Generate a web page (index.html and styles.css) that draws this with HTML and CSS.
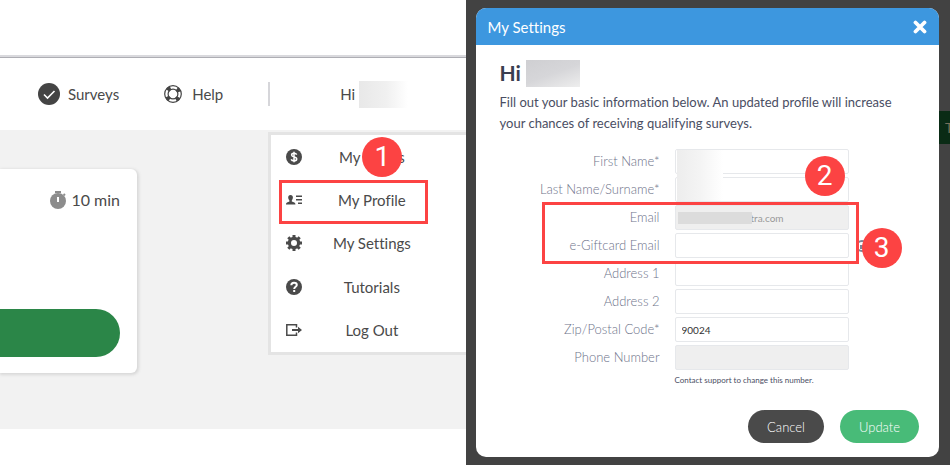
FILE: index.html
```html
<!DOCTYPE html>
<html lang="en">
<head>
    <meta charset="UTF-8">
    <meta name="viewport" content="width=device-width, initial-scale=1.0">
    <title>My Settings</title>
    <link rel="stylesheet" href="styles.css">
</head>
<body>
    <div class="panel">
        <header class="topbar"></header>
        <nav class="nav">
            <a class="nav-link" href="#">
                <svg class="check-icon" viewBox="0 0 22 22" aria-hidden="true">
                    <circle cx="11" cy="11" r="11" fill="#444"/>
                    <path d="M6 11.5l3.5 3.5 7-7" fill="none" stroke="#fff" stroke-width="1.6"/>
                </svg>
                Surveys
            </a>
            <a class="nav-link" href="#">
                <svg class="help-icon" viewBox="0 0 18 18" fill="none" stroke="#444" aria-hidden="true">
                    <circle cx="9" cy="9" r="8.3" stroke-width="1.2"/>
                    <circle cx="9" cy="9" r="4.9" stroke-width="1.2"/>
                    <circle cx="9" cy="9" r="6.5" stroke-width="4" stroke-dasharray="3.600 6.610" stroke-dashoffset="-3.300"/>
                </svg>
                Help
            </a>
            <div class="user">
                <span class="divider"></span>
                <span>Hi</span>
                <span class="redacted redacted-user"></span>
                <ul class="menu">
                    <li>
                        <a href="#">
                            <svg viewBox="0 0 16 16" aria-hidden="true">
                                <circle cx="8" cy="8" r="8" fill="#4a4a4a"/>
                                <path d="M10.7 5.6C10.2 4.7 9.3 4.3 8.1 4.3 6.500 4.300 5.600 5 5.600 6c0 2.600 5.100 1.200 5.100 3.900 0 1.100-1 1.900-2.700 1.900-1.400 0-2.400-.500-2.900-1.500M8 2.800v10.400" fill="none" stroke="#fff" stroke-width="1.5"/>
                            </svg>
                            <span>My Points</span>
                        </a>
                        <b class="badge badge-1">1</b>
                    </li>
                    <li>
                        <a href="#">
                            <svg viewBox="0 0 16 16" fill="#4a4a4a" aria-hidden="true">
                                <path d="M4.500 3C6.200 3 6.900 4.200 6.900 5.600c0 1.200-.500 2.200-1.100 2.800v1l2.600 1c.700.300 1 .900 1 1.600v.500H0V12c0-.700.300-1.300 1-1.600l2.400-1v-1C2.700 7.800 2.200 6.800 2.200 5.600 2.200 4.200 2.900 3 4.500 3z"/>
                                <path d="M10 3.500h6V5h-6zM10 7h6v1.500h-6zM12 10.500h4V12h-4z"/>
                            </svg>
                            <span>My Profile</span>
                        </a>
                        <i class="outline outline-profile"></i>
                    </li>
                    <li>
                        <a href="#">
                            <svg viewBox="0 0 16 16" aria-hidden="true">
                                <circle cx="8" cy="8" r="4.600" fill="none" stroke="#4a4a4a" stroke-width="3.200"/>
                                <path d="M8 0v3M8 13v3M0 8h3M13 8h3M2.300 2.300l2.200 2.200M11.500 11.500l2.200 2.200M13.700 2.300l-2.200 2.200M4.500 11.500l-2.200 2.200" stroke="#4a4a4a" stroke-width="3"/>
                            </svg>
                            <span>My Settings</span>
                        </a>
                    </li>
                    <li>
                        <a href="#">
                            <svg viewBox="0 0 16 16" aria-hidden="true">
                                <circle cx="8" cy="8" r="8" fill="#4a4a4a"/>
                                <path d="M5.300 6.200C5.300 4.500 6.400 3.700 8 3.700s2.800.900 2.800 2.300C10.800 7.800 8.200 7.800 8.200 10" fill="none" stroke="#fff" stroke-width="2"/>
                                <path d="M7.200 11h2v2h-2z" fill="#fff"/>
                            </svg>
                            <span>Tutorials</span>
                        </a>
                    </li>
                    <li>
                        <a href="#">
                            <svg viewBox="0 0 16 16" aria-hidden="true">
                                <path d="M10.500 5.500V2.800H.800v10.400h9.700V10.500" fill="none" stroke="#4a4a4a" stroke-width="1.500"/>
                                <path d="M6 7h6V4.800L16 8l-4 3.200V9H6z" fill="#4a4a4a"/>
                            </svg>
                            <span>Log Out</span>
                        </a>
                    </li>
                </ul>
            </div>
        </nav>
        <main class="surveys">
            <article class="card">
                <p class="duration">
                    <svg viewBox="0 0 16 18" aria-hidden="true">
                        <path d="M5 0h6v2H5zM13 3.500l1.200-1.200 1.500 1.500-1.200 1.200z" fill="#8c8c8c"/>
                        <circle cx="8" cy="10" r="8" fill="#8c8c8c"/>
                        <path d="M7 6h2v5H7z" fill="#fff"/>
                    </svg>
                    10 min
                </p>
                <button class="start-btn" type="button" aria-label="Start survey"></button>
            </article>
        </main>
    </div>

    <div class="overlay">
        <button class="behind-btn" type="button">T</button>
        <section class="modal">
            <header class="modal-header">
                <h2>My Settings</h2>
                <button class="close-btn" type="button" aria-label="Close">
                    <svg viewBox="0 0 14 14" aria-hidden="true">
                        <path d="M2.500 2.500l9 9M11.500 2.500l-9 9" stroke="#fff" stroke-width="3.800" stroke-linecap="round"/>
                    </svg>
                </button>
            </header>
            <form class="modal-body">
                <h1>Hi <span class="redacted redacted-title"></span></h1>
                <p class="intro">Fill out your basic information below. An updated profile will increase your chances of receiving qualifying surveys.</p>
                <div class="fields">
                    <label for="first-name">First Name*</label>
                    <input type="text" id="first-name">
                    <label for="last-name">Last Name/Surname*</label>
                    <input type="text" id="last-name">
                    <label for="email">Email</label>
                    <input class="email" type="text" id="email" value="tra.com" disabled>
                    <label for="giftcard-email">e-Giftcard Email</label>
                    <input type="text" id="giftcard-email">
                    <label for="address-1">Address 1</label>
                    <input type="text" id="address-1">
                    <label for="address-2">Address 2</label>
                    <input type="text" id="address-2">
                    <label for="zip">Zip/Postal Code*</label>
                    <input type="text" id="zip" value="90024">
                    <label for="phone">Phone Number</label>
                    <input type="text" id="phone" disabled>
                    <small>Contact support to change this number.</small>

                    <span class="redacted-names"></span>
                    <span class="redacted-email"></span>
                    <svg class="info-icon" viewBox="0 0 12 12" aria-hidden="true">
                        <circle cx="6" cy="6" r="5" fill="none" stroke="#7d8598" stroke-width="2"/>
                        <path d="M4 5h4v4H4z" fill="#7d8598"/>
                    </svg>
                    <i class="outline outline-email"></i>
                    <b class="badge badge-2">2</b>
                    <b class="badge badge-3">3</b>
                </div>
                <div class="actions">
                    <button class="cancel-btn" type="button">Cancel</button>
                    <button class="update-btn" type="submit">Update</button>
                </div>
            </form>
        </section>
    </div>
</body>
</html>
```

FILE: styles.css
```css
* {
    box-sizing: border-box;
}
body {
    display: grid;
    grid-template-columns: 49fr 51fr;
    min-height: 100vh;
    margin: 0;
    background-color: #FFF;
    color: #4A4A4A;
    font-family: Lato, sans-serif;
    font-size: 15px;
    font-variant-ligatures: none;
}
a {
    color: inherit;
    text-decoration: none;
}
button {
    border: none;
    font-family: inherit;
    cursor: pointer;
}

/* Left side */
.topbar {
    height: 58px;
    border-bottom: 1px solid #AEAEB4;
    box-shadow: inset 0 -2px #D9D9DD;
}
.nav {
    display: flex;
    gap: 45px;
    height: 72px;
    padding-left: 38px;
}
.nav-link {
    display: flex;
    align-items: center;
    gap: 8px;
}
.check-icon {
    width: 22px;
    height: 22px;
}
.help-icon {
    width: 18px;
    height: 18px;
    margin-right: 2px;
}
.user {
    position: relative;
    display: flex;
    flex: 1;
    align-items: center;
    gap: 4px;
}
.divider {
    width: 2px;
    height: 24px;
    margin-right: 66px;
    background-color: #D6D6DA;
}
.redacted {
    display: inline-block;
    height: 27px;
}
.redacted-user {
    width: 49px;
    background: linear-gradient(to right, #E8E8E8, #F0F0F0 55%, #FFF);
}
.menu {
    position: absolute;
    top: calc(100% + 2px);
    left: 0;
    right: 0;
    display: grid;
    grid-auto-rows: 1fr;
    height: 223px;
    margin: 0;
    padding: 0;
    list-style: none;
    background-color: #FFF;
    border: 3px solid #E4E4E4;
    border-right: none;
}
.menu li {
    position: relative;
}
.menu a {
    display: flex;
    align-items: center;
    height: 100%;
    padding: 0 24px 0 15px;
}
.menu svg {
    width: 16px;
    height: 16px;
}
.menu span {
    flex: 1;
    text-align: center;
}

/* Numbered steps */
.badge {
    position: absolute;
    width: 40px;
    height: 40px;
    border-radius: 50%;
    background-color: #FC4343;
    color: #FFF;
    font: 28px/40px Roboto, sans-serif;
    text-align: center;
}
.badge-1 {
    top: 2px;
    left: 91px;
}
.outline {
    position: absolute;
    border: 3px solid #FC4343;
    pointer-events: none;
}
.outline-profile {
    top: 2px;
    right: 38px;
    bottom: -2px;
    left: 8px;
}
.surveys {
    padding: 39px 0 56px;
    background-color: #F2F2F2;
}
.card {
    display: flex;
    flex-direction: column;
    justify-content: space-between;
    align-items: flex-end;
    width: 137px;
    height: 204px;
    padding: 21px 17px 16px 0;
    border-radius: 0 6px 6px 0;
    background-color: #FFF;
    box-shadow: 1px 1px 3px 1px #D8D8D8;
}
.duration {
    display: flex;
    align-items: center;
    gap: 5px;
    margin: 0;
    font-size: 16px;
}
.duration svg {
    width: 16px;
    height: 18px;
}
.start-btn {
    width: 100%;
    height: 48px;
    border-radius: 0 24px 24px 0;
    background-color: #2B8648;
}

/* Right side */
.overlay {
    position: relative;
    padding: 8px 11px 9px 10px;
    background-color: #424242;
    overflow: hidden;
}
.behind-btn {
    position: absolute;
    top: 111px;
    right: -30px;
    width: 60px;
    height: 33px;
    padding: 0 0 0 25px;
    background-color: #0A2B15;
    color: #77705A;
    font-size: 14px;
    text-align: left;
}
.modal {
    position: relative;
    border-radius: 10px;
    background-color: #FFF;
    color: #4A4E63;
    overflow: hidden;
}
.modal-header {
    display: flex;
    align-items: center;
    justify-content: space-between;
    height: 37px;
    padding: 0 12px;
    background-color: #3D97DF;
    color: #FFF;
}
.modal-header h2 {
    margin: 0;
    font-size: 15px;
    font-weight: 400;
}
.close-btn {
    display: flex;
    padding: 0;
    background: none;
}
.close-btn svg {
    width: 14px;
    height: 14px;
}
.modal-body {
    padding: 14px 20px 14px 24px;
}
.modal-body h1 {
    display: flex;
    align-items: center;
    gap: 5px;
    margin: 0;
    color: #3A3E50;
    font-size: 21px;
    line-height: 28px;
}
.redacted-title {
    width: 54px;
    background: linear-gradient(160deg, #CFCFD2, #D6D6D9 50%, #EEE);
}
.intro {
    margin: 5px 0 15px;
    font-size: 13px;
    line-height: 21px;
}
.fields {
    position: relative;
    display: grid;
    grid-template-columns: 160px minmax(0, 174px);
    gap: 3px 15px;
}
.fields label {
    color: #6E738A;
    font-size: 13px;
    font-weight: 300;
    line-height: 24px;
    text-align: right;
}
.fields input {
    width: 100%;
    height: 25px;
    padding: 0 6px;
    border: 1px solid #E6E8EB;
    border-radius: 2px;
    background-color: #FFF;
    color: #333;
    font-family: inherit;
    font-size: 10px;
}
.fields input:disabled {
    background-color: #EFEFEF;
    color: #999;
}
.fields .email {
    padding-left: 75px;
}
.fields small {
    grid-column: 2;
    font-size: 8px;
    line-height: 14px;
}
.redacted-names {
    position: absolute;
    top: 1px;
    left: 177px;
    width: 46px;
    height: 51px;
    background: linear-gradient(to right, #EDEDED, #F4F4F4 50%, #FFF);
}
.redacted-email {
    position: absolute;
    top: 63px;
    left: 178px;
    width: 74px;
    height: 12px;
    background-color: #DCDCDC;
}
.info-icon {
    position: absolute;
    top: 91px;
    left: 356px;
    width: 12px;
    height: 12px;
}
.outline-email {
    top: 53px;
    left: 42px;
    width: 317px;
    height: 62px;
}
.badge-2 {
    top: 7px;
    left: 305px;
}
.badge-3 {
    top: 79px;
    left: 362px;
}
.actions {
    display: flex;
    justify-content: flex-end;
    gap: 16px;
    margin-top: 23px;
}
.actions button {
    height: 33px;
    padding: 0 19px;
    border-radius: 17px;
    color: #FFF;
    font-size: 13px;
    font-weight: 300;
}
.actions .cancel-btn {
    background-color: #4A4A4A;
}
.actions .update-btn {
    background-color: #48BB78;
}
```
